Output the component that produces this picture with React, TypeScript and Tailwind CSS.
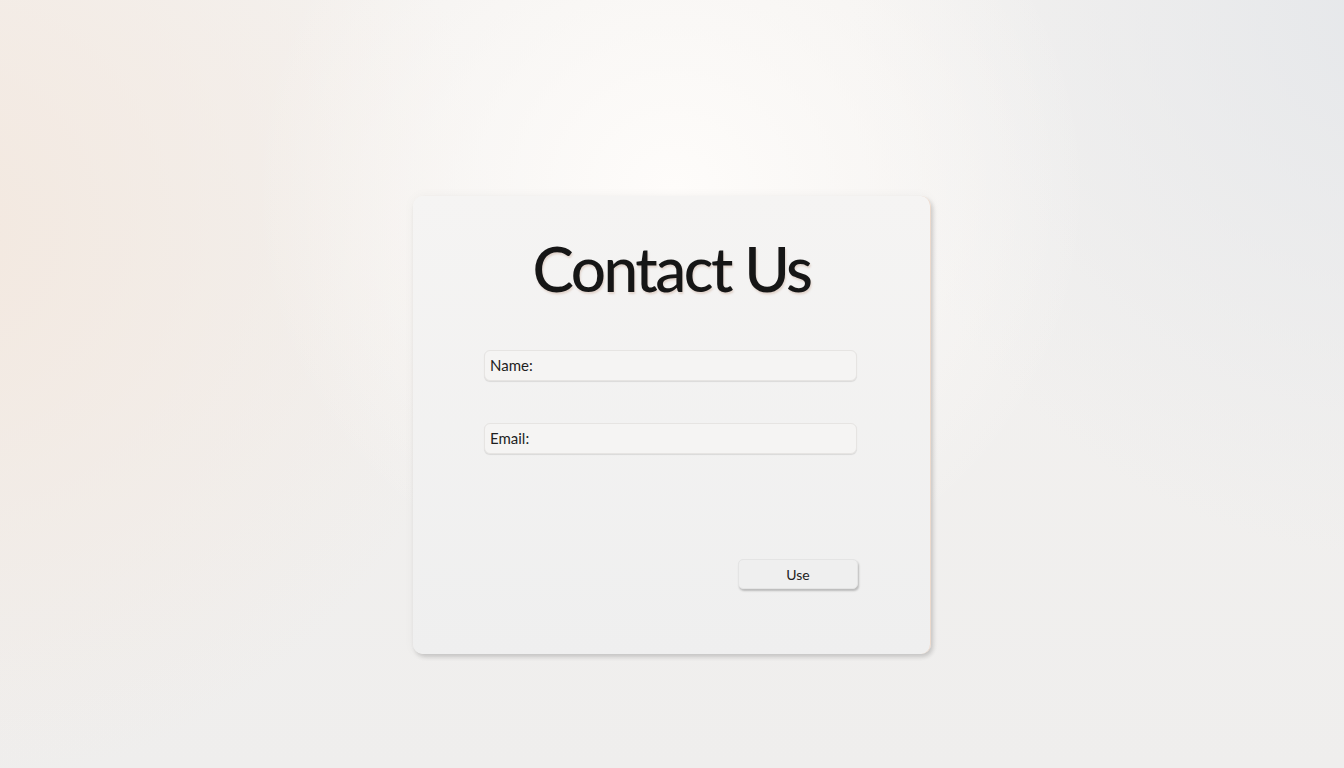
import React from "react";

const Field = ({ label }: { label: string }) => (
  <div className="h-[31px] w-[373px] flex items-center px-[5px] rounded-[6px] bg-[#f5f4f3] border border-[#e6e4e2] shadow-[0_1px_1px_rgba(0,0,0,0.1)]">
    <span className="text-[15px] text-[#1e1e1e] font-['Lato',sans-serif]">{label}</span>
  </div>
);

const App = () => {
  return (
    <div className="min-h-screen w-full flex justify-center pt-[196px] bg-[radial-gradient(circle_at_50%_25%,#fefcfa_0px,rgba(254,252,250,0)_420px),radial-gradient(circle_at_-5%_30%,#f3e8df_0px,rgba(243,232,223,0)_560px),radial-gradient(circle_at_105%_0%,#e5e7ea_0px,rgba(229,231,234,0)_560px),linear-gradient(180deg,#f4f2f0,#efeeed)]">
      <div className="w-[518px] h-[458px] rounded-[10px] bg-[linear-gradient(180deg,#f5f4f3,#efefef)] border-r border-[#ecd9cc] shadow-[2px_3px_4px_rgba(0,0,0,0.16),0_0_12px_rgba(0,0,0,0.04)] flex flex-col px-[71px]">
        {/* heading */}
        <h1 className="pt-[41px] text-center text-[62px] leading-none font-medium tracking-[-0.04em] text-[#161616] font-['Lato',sans-serif] [text-shadow:1px_2px_2px_rgba(170,120,90,0.25)]">
          Contact Us
        </h1>

        <form className="mt-[51px] flex flex-col gap-[42px]">
          <Field label="Name:" />
          <Field label="Email:" />
        </form>

        <div className="mt-[105px] w-[374px] flex justify-end">
          <button
            type="button"
            className="w-[120px] h-[30px] rounded-[5px] bg-[#efefef] border border-[#e4e4e4] shadow-[1px_2px_2px_rgba(0,0,0,0.22)] text-[14px] text-[#222] font-['Lato',sans-serif]"
          >
            Use
          </button>
        </div>
      </div>
    </div>
  );
};

export default App;
